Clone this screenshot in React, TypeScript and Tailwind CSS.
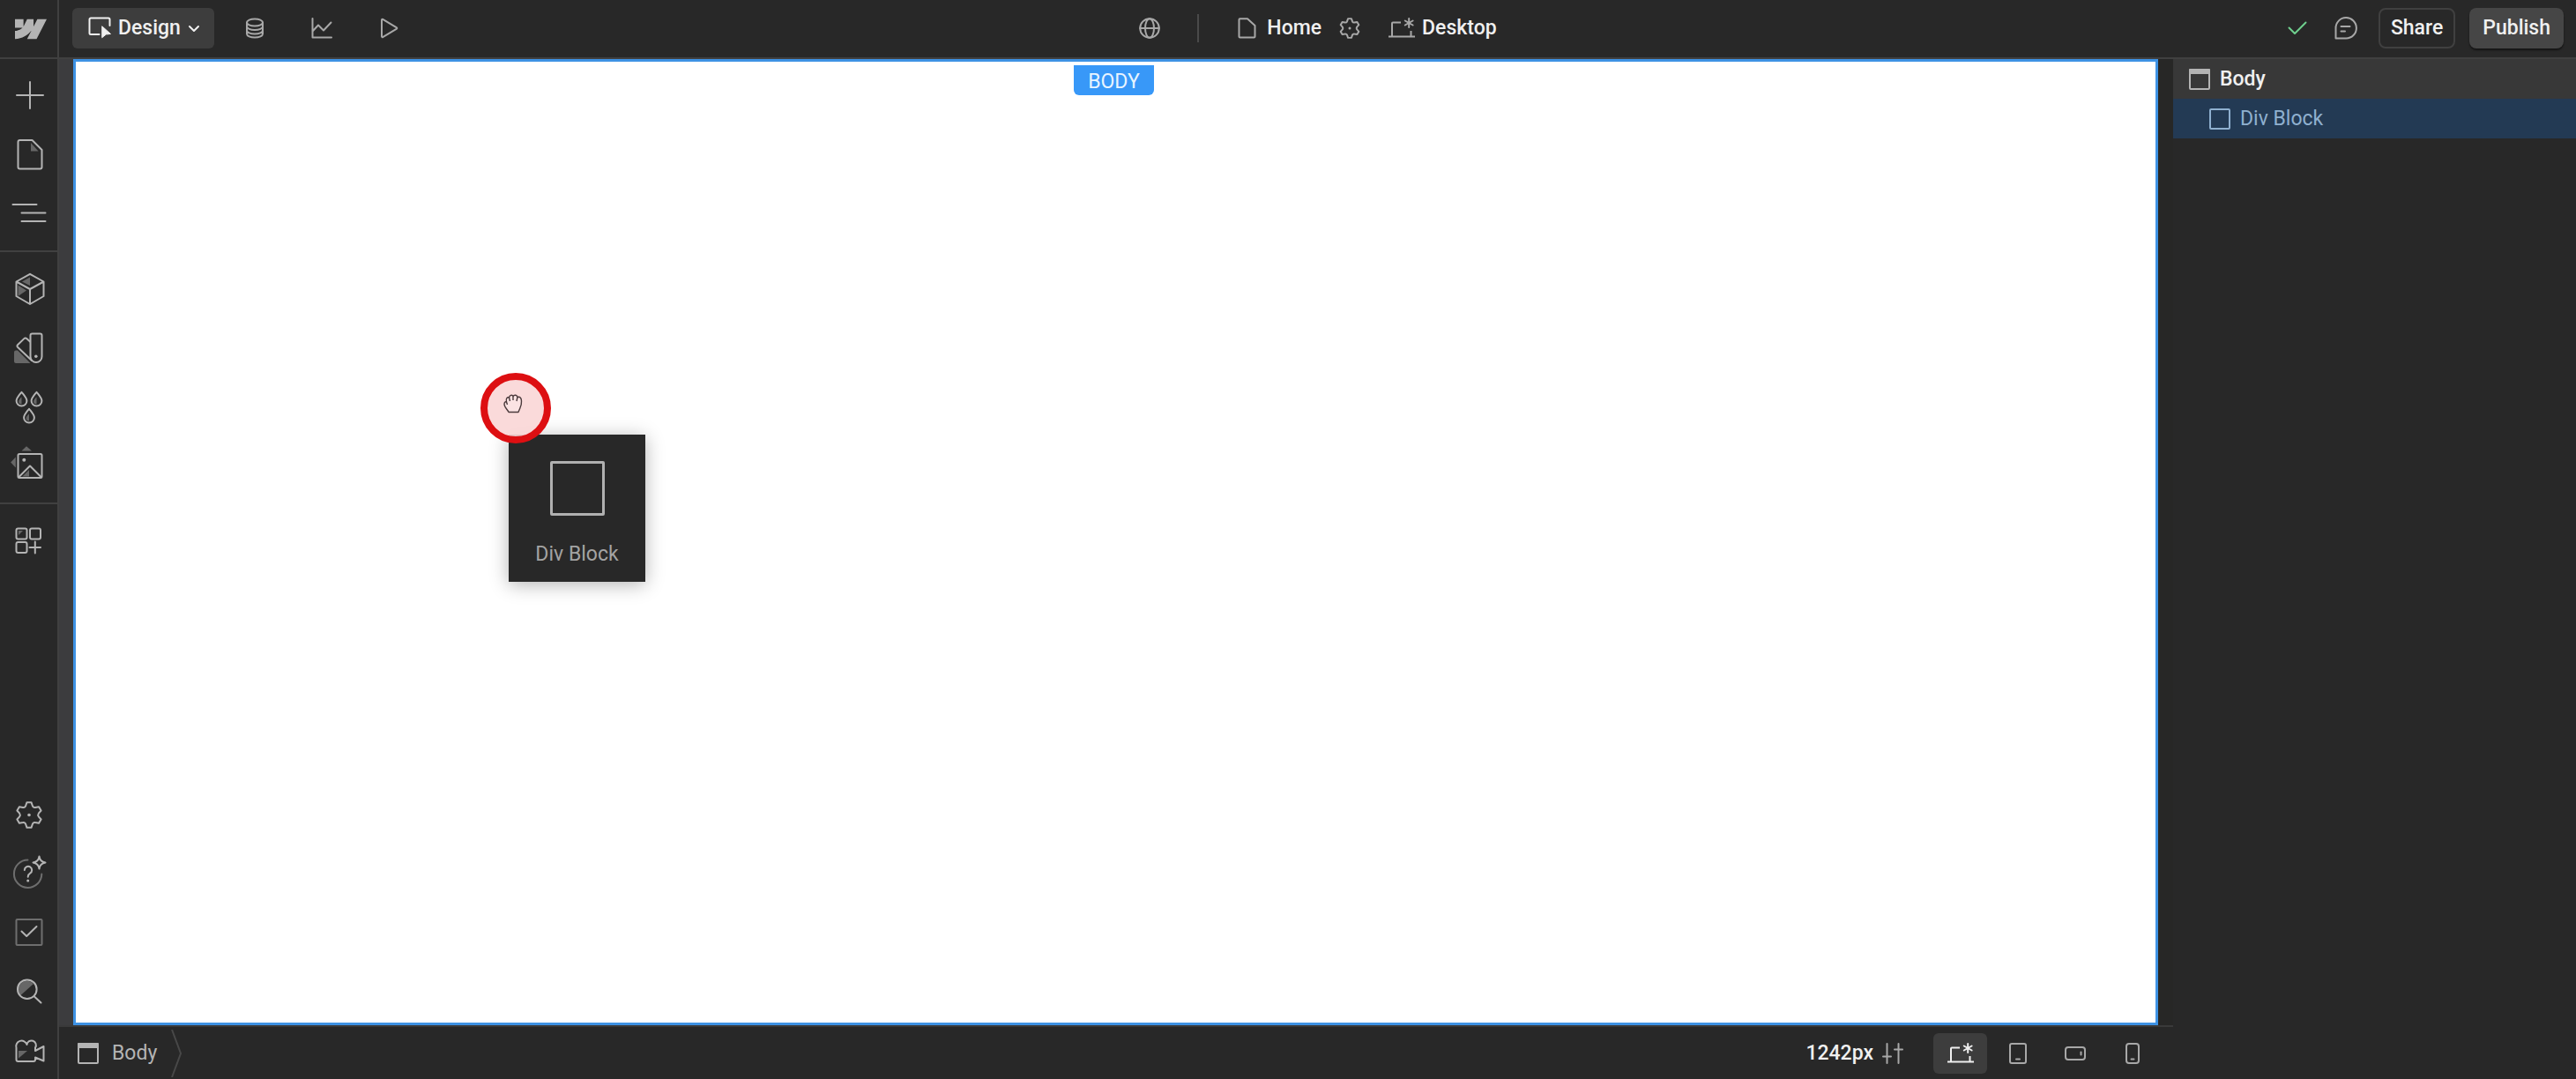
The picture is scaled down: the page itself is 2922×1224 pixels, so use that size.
import React from 'react';

type IconProps = {
    size?: number;
    className?: string;
    children: React.ReactNode;
};

// All stroke icons share a 2px line, sizes equal their viewBox
const Icon = ({ size = 40, className = '', children }: IconProps) => (
    <svg
        width={size}
        height={size}
        viewBox={`0 0 ${size} ${size}`}
        fill="none"
        stroke="currentColor"
        strokeWidth="2"
        strokeLinecap="round"
        strokeLinejoin="round"
        aria-hidden="true"
        className={`shrink-0 overflow-visible ${className}`}
    >
        {children}
    </svg>
);

const Shade = ({ d }: { d: string }) => <path d={d} fill="currentColor" stroke="none" opacity="0.45" />;

const gearPath =
    'M2.5-14.3 4-10Q5-8.2 7-8.6L11.1-9.3 13.6-5 10.8-1.8Q9.6 0 10.8 1.8L13.6 5 11.1 9.3 7 8.6Q5 8.2 4 10L2.5 14.3H-2.5L-4 10Q-5 8.2-7 8.6L-11.1 9.3-13.6 5-10.8 1.8Q-9.6 0-10.8-1.8L-13.6-5-11.1-9.3-7-8.6Q-5-8.2-4-10L-2.5-14.3Z';

const LogoIcon = () => (
    <svg width="36" height="36" viewBox="0 0 24 24" fill="currentColor" aria-hidden="true">
        <path d="m24 4.515-7.658 14.97H9.149l3.205-6.204h-.144C9.566 16.713 5.621 18.973 0 19.485v-6.118s3.596-.213 5.71-2.435H0V4.515h6.417v5.278l.144-.001 2.622-5.277h4.854v5.244h.144l2.72-5.244H24Z" />
    </svg>
);

const AddIcon = () => (
    <Icon>
        <path d="M7 19H37M22 4V34" />
    </Icon>
);

const PagesIcon = () => (
    <Icon>
        <path d="M10.500 3H24.500L35.500 14V33.500a2 2 0 0 1-2 2H10.500a2 2 0 0 1-2-2V5a2 2 0 0 1 2-2Z" />
        <Shade d="M23 6V15.500H31.500Z" />
    </Icon>
);

const NavigatorIcon = () => (
    <Icon>
        <path d="M2.500 9H29.500M12.500 18.500H39.500M12.500 28H39.500" />
    </Icon>
);

const ComponentsIcon = () => (
    <Icon>
        <path d="M22 2.800 37.500 11.500V28L22 37 6.500 28V11.500ZM6.500 11.500 22 20 37.500 11.500M22 20V37" />
        <Shade d="M13 11.500 22 6.500V16Z" />
        <Shade d="M8.500 15.500 18 21.500 8.500 28Z" />
    </Icon>
);

const StylesIcon = () => (
    <Icon>
        <path d="M24.500 3.500H33.500a2 2 0 0 1 2 2V29.500a6.500 6.500 0 0 1-13 0V5.500a2 2 0 0 1 2-2Z" />
        <path d="M22 12.500 18.500 9.300a2.500 2.500 0 0 0-3.400.1L8 16.200a1.800 1.800 0 0 0 0 2.600L24 34" />
        <circle cx="28.800" cy="29.200" r="1.800" fill="currentColor" stroke="none" />
        <Shade d="M6 22.500H8L22.500 37H6a2 2 0 0 1-2-2V24.500a2 2 0 0 1 2-2Z" />
    </Icon>
);

const VariablesIcon = () => (
    <Icon>
        {['translate(12.5 0)', 'translate(29.5 0)', 'translate(21 19)'].map((transform) => (
            <g key={transform} transform={transform}>
                <path d="M0 2.800C2.500 6 5.900 9.500 5.900 12.700a5.900 5.900 0 0 1-11.800 0C-5.900 9.500-2.500 6 0 2.800Z" />
                <Shade d="M0 8.500V16.500C-4.500 16.500-4.500 12 0 8.500Z" />
            </g>
        ))}
    </Icon>
);

const AssetsIcon = () => (
    <Icon>
        <rect x="8.500" y="6" width="27" height="27" rx="1.500" />
        <circle cx="15.300" cy="12.700" r="2" fill="currentColor" stroke="none" />
        <path d="M9.500 32 22 19.500 34.500 32" />
        <Shade d="M12.500 2.500 18-2.800 24 2.500Z" />
        <Shade d="M.2 15.500 5.800 9.500V21.500Z" />
        <Shade d="M13.500 31.500 21 24V31.500Z" />
    </Icon>
);

const AppsIcon = () => (
    <Icon>
        <rect x="6.500" y="5.500" width="12" height="12" rx="2" />
        <rect x="22" y="5.500" width="12" height="12" rx="2" />
        <rect x="6.500" y="21" width="12" height="12" rx="2" />
        <path d="M27.800 20.500V33.500M21.500 27H34" />
        <Shade d="M9 8H14L9 13Z" />
    </Icon>
);

const SettingsIcon = () => (
    <Icon>
        <path transform="translate(21 21.5)" d={gearPath} />
        <circle cx="21" cy="21.500" r="1.800" fill="currentColor" stroke="none" />
    </Icon>
);

const HelpIcon = () => (
    <Icon>
        <path d="M19.500 5.500A15.700 15.700 0 1 0 35.300 21.500" opacity="0.5" />
        <path d="M15.800 17a4.200 4.200 0 1 1 6.300 3.700c-1.600 1-2.400 1.900-2.400 4" />
        <circle cx="19.700" cy="29" r="1.500" fill="currentColor" stroke="none" />
        <path d="M32.500 1.500Q33.300 7.400 39.500 8.500 33.300 9.600 32.500 15.500 31.700 9.600 25.500 8.500 31.700 7.400 32.500 1.500Z" />
    </Icon>
);

const AuditIcon = () => (
    <Icon>
        <rect x="6.500" y="6" width="29" height="29" rx="1" opacity="0.5" />
        <path d="M12.500 19.500 18.200 25 29.500 14" />
    </Icon>
);

const SearchIcon = () => (
    <Icon>
        <circle cx="18.800" cy="18.200" r="10.800" />
        <path d="M26.700 26.200 34.500 33.500" />
        <Shade d="M11.500 25A9.500 9.500 0 0 1 26 12Z" />
    </Icon>
);

const VideoIcon = () => (
    <Icon>
        <path d="M6.500 17.800V31a2 2 0 0 0 2 2H26a2 2 0 0 0 2-2V28.500L37.500 32.500V16L28 21V17.500A5.200 5.200 0 1 0 18.500 14 5.200 5.200 0 1 0 6.500 17.800Z" />
        <Shade d="M9 21H19L9 29.500Z" />
    </Icon>
);

const DesignIcon = () => (
    <Icon size={26}>
        <path d="M12.500 20H3a1.500 1.500 0 0 1-1.500-1.500V3A1.500 1.500 0 0 1 3 1.500H23A1.500 1.500 0 0 1 24.500 3V10" />
        <path d="M16 11 25.500 19.500 20.300 20 16 23.500Z" fill="currentColor" strokeWidth="1" />
    </Icon>
);

const DatabaseIcon = () => (
    <Icon size={24}>
        <ellipse cx="12" cy="5.500" rx="9" ry="4" />
        <path d="M3 5.500V18.500c0 2.200 4 4 9 4s9-1.800 9-4V5.500M3 10c0 2.200 4 4 9 4s9-1.800 9-4M3 14.500c0 2.200 4 4 9 4s9-1.800 9-4" />
    </Icon>
);

const ChartIcon = () => (
    <Icon size={24}>
        <path d="M1.500 1V22.500H23M1.500 15.500 8 8.500 14 14.500 22.500 5.500" />
    </Icon>
);

const PlayIcon = () => (
    <Icon size={24}>
        <path d="M4 2.500V21.500a.8.8 0 0 0 1.200.6L21 12.600a.8.8 0 0 0 0-1.200L5.200 1.900A.8.8 0 0 0 4 2.500Z" />
    </Icon>
);

const GlobeIcon = () => (
    <Icon size={24}>
        <circle cx="12" cy="12" r="10.800" />
        <ellipse cx="12" cy="12" rx="5" ry="10.800" />
        <path d="M1.200 12H22.800" />
    </Icon>
);

const PageIcon = () => (
    <Icon size={24}>
        <path d="M4.500 1.300H13L21.500 9V21.500a1 1 0 0 1-1 1H4.500a1 1 0 0 1-1-1V2.300a1 1 0 0 1 1-1Z" />
    </Icon>
);

const DesktopIcon = () => (
    <Icon size={30}>
        <path d="M0 24.500H30M4 24.500V9.500a1 1 0 0 1 1-1H14M25.500 18V24" strokeLinecap="butt" />
        <path d="M23.200 4V14M18.800 6.500 27.600 11.500M18.800 11.500 27.600 6.500" />
    </Icon>
);

const BodyIcon = () => (
    <Icon size={24}>
        <rect x="1" y="1" width="22" height="22" rx="1" />
        <path d="M1 1H23V5H1Z" fill="currentColor" />
    </Icon>
);

const leftTop = [
    { label: 'Add', icon: <AddIcon /> },
    { label: 'Pages', icon: <PagesIcon /> },
    { label: 'Navigator', icon: <NavigatorIcon /> },
];

const leftMiddle = [
    { label: 'Components', icon: <ComponentsIcon /> },
    { label: 'Styles', icon: <StylesIcon /> },
    { label: 'Variables', icon: <VariablesIcon /> },
    { label: 'Assets', icon: <AssetsIcon /> },
];

const leftBottom = [
    { label: 'Settings', icon: <SettingsIcon /> },
    { label: 'Help', icon: <HelpIcon /> },
    { label: 'Audit', icon: <AuditIcon /> },
    { label: 'Search', icon: <SearchIcon /> },
    { label: 'Video tutorials', icon: <VideoIcon /> },
];

const SideButton = ({ label, icon }: { label: string; icon: React.ReactNode }) => (
    <button type="button" aria-label={label} className="flex h-[67px] w-full items-center justify-center pr-0.5">
        {icon}
    </button>
);

const Sidebar = () => (
    <aside className="flex w-[67px] shrink-0 flex-col border-r-2 border-[#404040] text-[#b4b4b4]">
        <a href="#" aria-label="Dashboard" className="flex h-[67px] items-center justify-center border-b-2 border-[#404040] pl-1">
            <LogoIcon />
        </a>
        <nav className="flex flex-1 flex-col">
            <div className="border-b-2 border-[#404040] py-2">
                {leftTop.map((item) => (
                    <SideButton key={item.label} {...item} />
                ))}
            </div>
            <div className="border-b-2 border-[#404040] py-2">
                {leftMiddle.map((item) => (
                    <SideButton key={item.label} {...item} />
                ))}
            </div>
            <div className="py-2">
                <SideButton label="Apps" icon={<AppsIcon />} />
            </div>
            <div className="mt-auto">
                {leftBottom.map((item) => (
                    <SideButton key={item.label} {...item} />
                ))}
            </div>
        </nav>
    </aside>
);

const modes = [
    { label: 'CMS', icon: <DatabaseIcon /> },
    { label: 'Insights', icon: <ChartIcon /> },
    { label: 'Preview', icon: <PlayIcon /> },
];

const TopBar = () => (
    <header className="grid h-[67px] shrink-0 grid-cols-[1fr_auto_1fr] items-center border-b-2 border-[#404040] pr-[14px] pb-0.5 pl-[15px] font-medium text-[#f0f0f0]">
        <div className="flex items-center">
            <button type="button" className="mr-2 flex h-[46px] items-center gap-2 rounded-md bg-[#3d3d3d] pr-4 pl-[18px]">
                <DesignIcon />
                Design
                <Icon size={14}>
                    <path d="M2 5 7 10 12 5" />
                </Icon>
            </button>
            {modes.map((mode) => (
                <button
                    key={mode.label}
                    type="button"
                    aria-label={mode.label}
                    className="flex h-[46px] w-[76px] items-center justify-center text-[#a8a8a8]"
                >
                    {mode.icon}
                </button>
            ))}
        </div>

        <div className="flex items-center">
            <button type="button" aria-label="Locales" className="text-[#a8a8a8]">
                <GlobeIcon />
            </button>
            <div className="mx-[42px] h-8 w-[2px] bg-[#4a4a4a]" />
            <button type="button" className="flex items-center gap-[11px]">
                <span className="text-[#a8a8a8]"><PageIcon /></span>
                Home
            </button>
            <button type="button" aria-label="Page settings" className="ml-5 text-[#a8a8a8]">
                <Icon size={24}>
                    <path transform="translate(12 12) scale(0.76)" strokeWidth="2.6" d={gearPath} />
                    <circle cx="12" cy="12" r="1.500" fill="currentColor" stroke="none" />
                </Icon>
            </button>
            <button type="button" className="ml-8 flex items-center gap-2">
                <span className="text-[#a8a8a8]"><DesktopIcon /></span>
                Desktop
            </button>
        </div>

        <div className="flex items-center justify-end">
            <button type="button" aria-label="Saved" className="mr-[30px] text-[#6fcf8e]">
                <Icon size={24}>
                    <path d="M2.500 11.500 9 18 21.500 5.500" />
                </Icon>
            </button>
            <button type="button" aria-label="Comments" className="mr-6 text-[#a8a8a8]">
                <Icon size={26}>
                    <path d="M1.500 24.500V13A11.700 11.700 0 1 1 13.200 24.500ZM7.500 11H17.500M7.500 16.500H12" />
                </Icon>
            </button>
            <button type="button" className="mr-4 h-[46px] rounded-lg border-2 border-[#404040] px-3">
                Share
            </button>
            <button type="button" className="h-[46px] rounded-lg bg-[#464646] px-[15px] shadow-[0_2px_2px_rgba(0,0,0,0.5)]">
                Publish
            </button>
        </div>
    </header>
);

const Canvas = () => (
    <main className="flex min-h-0 flex-1 bg-[#3c3c3e] pl-4">
        <div className="relative flex-1 border-[3px] border-[#3e92e4] bg-white">
            <div className="absolute inset-x-0 top-1 flex justify-center pr-1">
                <span className="flex h-[34px] items-center rounded-b-md bg-[#3898f8] px-4 pt-1 text-[#e8f4ff]">
                    BODY
                </span>
            </div>

            {/* element being dragged */}
            <div className="absolute top-[423px] left-[491px] flex h-[167px] w-[155px] flex-col items-center bg-[#282828] pt-[30px] text-[#a3a3a3] shadow-[0_3px_20px_rgba(0,0,0,0.3)]">
                <div className="mb-[30px] size-[62px] rounded-xs border-[3px] border-[#b0b0b0]" />
                Div Block
            </div>

            {/* click marker with the grab cursor */}
            <div className="absolute top-[353px] left-[459px] size-20 rounded-full border-8 border-[#dd0f12] bg-[#f9d6d6]/90">
                <svg
                    width="22"
                    height="22"
                    viewBox="0 0 22 22"
                    fill="#fbe3e3"
                    stroke="#4b3a3c"
                    strokeWidth="1.4"
                    strokeLinejoin="round"
                    aria-hidden="true"
                    className="absolute top-4 left-[18px]"
                >
                    <path d="M6 20.500C5 18 1 15 1 11.500 1 9 2.500 8.500 3.500 9 2.500 5 4.500 3 6.500 4 7 1 10 .5 11 2.500 12.500.5 15.500 1 16 3.500 18.500 2.500 20.500 4.500 20.500 8 21 13 19 15 17 20.500Z" />
                    <path d="M6.500 4 7.500 8M11 2.500V7M16 3.500 15 8M3.500 9 4.500 12" />
                </svg>
            </div>
        </div>
        <div className="w-[17px] bg-[#272726]" />
    </main>
);

const breakpoints = [
    {
        label: 'Desktop breakpoint',
        active: true,
        icon: <DesktopIcon />,
    },
    {
        label: 'Tablet breakpoint',
        active: false,
        icon: (
            <Icon size={24}>
                <rect x="3" y="1" width="18" height="22" rx="2" />
                <path d="M10 18.500H14" />
            </Icon>
        ),
    },
    {
        label: 'Mobile landscape breakpoint',
        active: false,
        icon: (
            <Icon size={24}>
                <rect x="1" y="5" width="22" height="14" rx="3" />
                <path d="M18.500 10.500V13.500" />
            </Icon>
        ),
    },
    {
        label: 'Mobile portrait breakpoint',
        active: false,
        icon: (
            <Icon size={24}>
                <rect x="5" y="1" width="14" height="22" rx="3" />
                <path d="M10.500 18.500H13.500" />
            </Icon>
        ),
    },
];

const BottomBar = () => (
    <footer className="flex h-[61px] shrink-0 items-center border-t-2 border-[#3a3a3a] pr-4 pl-[21px] text-[#b4b4b4]">
        <button type="button" className="flex items-center gap-[15px]">
            <BodyIcon />
            Body
        </button>
        <svg width="12" height="54" viewBox="0 0 12 54" fill="none" stroke="#484848" strokeWidth="2" aria-hidden="true" className="ml-4">
            <path d="M1 0 11 27 1 54" />
        </svg>

        <div className="ml-auto flex items-center gap-1">
            <button type="button" className="mr-[30px] flex items-center gap-[10px] font-medium text-[#f0f0f0]">
                1242px
                <Icon size={24} className="text-[#a8a8a8]">
                    <path d="M5.500 1V23M1 15.500H10M18.500 1V23M14 7.500H23" />
                </Icon>
            </button>
            {breakpoints.map((bp) => (
                <button
                    key={bp.label}
                    type="button"
                    aria-label={bp.label}
                    className={`flex h-[46px] w-[61px] items-center justify-center rounded-md ${bp.active ? 'bg-[#3d3d3d] text-[#f0f0f0]' : 'text-[#a8a8a8]'}`}
                >
                    {bp.icon}
                </button>
            ))}
        </div>
    </footer>
);

const NavigatorPanel = () => (
    <section aria-label="Navigator" className="w-[457px] shrink-0">
        <ul>
            <li className="flex h-[45px] items-center gap-[11px] bg-[#383838] pl-[18px] font-medium text-[#f0f0f0]">
                <span className="text-[#b4b4b4]"><BodyIcon /></span>
                Body
            </li>
            <li className="flex h-[45px] items-center gap-[11px] bg-[#233a54] pl-[41px] text-[#8fb0cf]">
                <Icon size={24}>
                    <rect x="1" y="1" width="22" height="22" rx="1" />
                </Icon>
                Div Block
            </li>
        </ul>
    </section>
);

const App = () => {
    return (
        <div className="flex h-screen bg-[#282828] font-[Roboto,sans-serif] text-[23px] leading-7">
            <Sidebar />
            <div className="flex min-w-0 flex-1 flex-col">
                <TopBar />
                <div className="flex min-h-0 flex-1">
                    <div className="flex min-w-0 flex-1 flex-col">
                        <Canvas />
                        <BottomBar />
                    </div>
                    <NavigatorPanel />
                </div>
            </div>
        </div>
    );
};

export default App;
